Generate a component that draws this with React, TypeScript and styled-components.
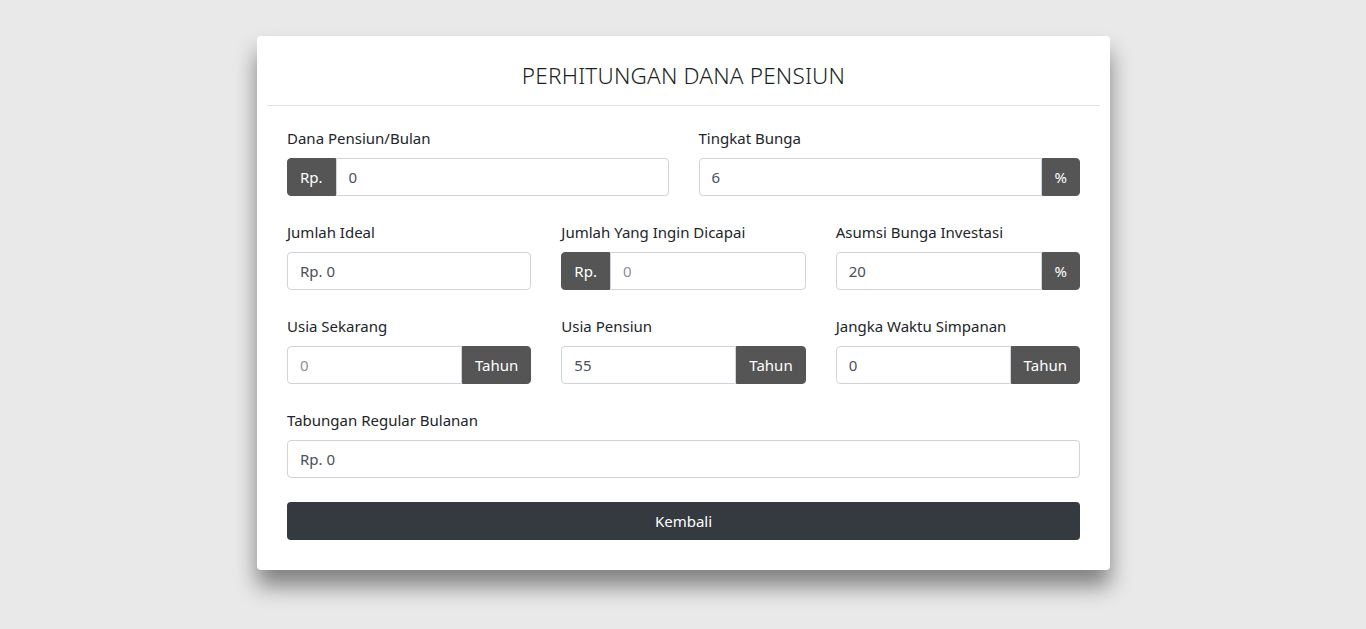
import React from 'react'
import styled, { createGlobalStyle } from 'styled-components'

const GlobalStyle = createGlobalStyle`
  * {
    box-sizing: border-box;
  }

  body {
    margin: 0;
    background: #e9e9e9;
    font-family: 'Noto Sans', 'Open Sans', sans-serif;
    color: #212529;
  }
`

type FieldProps = {
  label: string
  value?: string
  placeholder?: string
  prepend?: string
  append?: string
}

function Field(props: FieldProps) {
  return (
    <Group>
      <Label>{props.label}</Label>
      <InputGroup>
        {props.prepend && <Addon $side="left">{props.prepend}</Addon>}
        <Input
          defaultValue={props.value}
          placeholder={props.placeholder}
          $left={!!props.prepend}
          $right={!!props.append}
        />
        {props.append && <Addon $side="right">{props.append}</Addon>}
      </InputGroup>
    </Group>
  )
}

export default function App() {
  return (
    <>
      <GlobalStyle />
      <Page>
        <Card>
          <Header>
            <Title>PERHITUNGAN DANA PENSIUN</Title>
          </Header>
          <Divider />
          <Form>
            <Row $cols={2}>
              <Field label="Dana Pensiun/Bulan" prepend="Rp." value="0" />
              <Field label="Tingkat Bunga" append="%" value="6" />
            </Row>
            <Row $cols={3}>
              <Field label="Jumlah Ideal" value="Rp. 0" />
              <Field label="Jumlah Yang Ingin Dicapai" prepend="Rp." placeholder="0" />
              <Field label="Asumsi Bunga Investasi" append="%" value="20" />
            </Row>
            <Row $cols={3}>
              <Field label="Usia Sekarang" append="Tahun" placeholder="0" />
              <Field label="Usia Pensiun" append="Tahun" value="55" />
              <Field label="Jangka Waktu Simpanan" append="Tahun" value="0" />
            </Row>
            <Row $cols={1}>
              <Field label="Tabungan Regular Bulanan" value="Rp. 0" />
            </Row>
            <Button type="button">Kembali</Button>
          </Form>
        </Card>
      </Page>
    </>
  )
}

const Page = styled.div`
  min-height: 629px;
  padding-top: 36px;
  display: flex;
  justify-content: center;
  align-items: flex-start;
`

const Card = styled.div`
  width: 853px;
  margin-left: 1px;
  background: #fff;
  border-radius: 4px;
  box-shadow: 0 16px 22px rgba(0, 0, 0, 0.45);
  padding: 0 10px 30px;
`

const Header = styled.div`
  padding: 27px 0 16px;
  text-align: center;
`

const Title = styled.h1`
  margin: 0;
  font-size: 22.5px;
  line-height: 26px;
  font-weight: 300;
  color: #1c1f23;
  letter-spacing: 0.2px;
`

const Divider = styled.hr`
  margin: 0;
  border: 0;
  border-top: 1px solid #dee2e6;
`

const Form = styled.form`
  padding: 20px 20px 0;
`

const Row = styled.div<{ $cols: number }>`
  display: grid;
  grid-template-columns: repeat(${(p) => p.$cols}, minmax(0, 1fr));
  column-gap: 30px;
  margin-bottom: 24px;
`

const Group = styled.div`
  display: flex;
  flex-direction: column;
  min-width: 0;
`

const Label = styled.label`
  font-size: 15px;
  line-height: 24px;
  margin-bottom: 8px;
  color: #212529;
`

const InputGroup = styled.div`
  display: flex;
  height: 38px;
`

const Input = styled.input<{ $left: boolean; $right: boolean }>`
  flex: 1;
  width: 100%;
  min-width: 0;
  height: 38px;
  padding: 0 12px;
  font-family: inherit;
  font-size: 15px;
  color: #495057;
  background: #fff;
  border: 1px solid #ced4da;
  border-radius: ${(p) =>
    `${p.$left ? 0 : 4}px ${p.$right ? 0 : 4}px ${p.$right ? 0 : 4}px ${p.$left ? 0 : 4}px`};
  outline: none;

  &::placeholder {
    color: #8a9096;
  }
`

const Addon = styled.span<{ $side: 'left' | 'right' }>`
  display: flex;
  align-items: center;
  flex-shrink: 0;
  padding: 0 12px;
  background: #555555;
  color: #fff;
  font-size: 15px;
  border: 1px solid #555555;
  border-radius: ${(p) => (p.$side === 'left' ? '4px 0 0 4px' : '0 4px 4px 0')};
`

const Button = styled.button`
  display: block;
  width: 100%;
  height: 38px;
  border: 0;
  border-radius: 4px;
  background: #343a40;
  color: #fff;
  font-family: inherit;
  font-size: 15px;
  cursor: pointer;
`
